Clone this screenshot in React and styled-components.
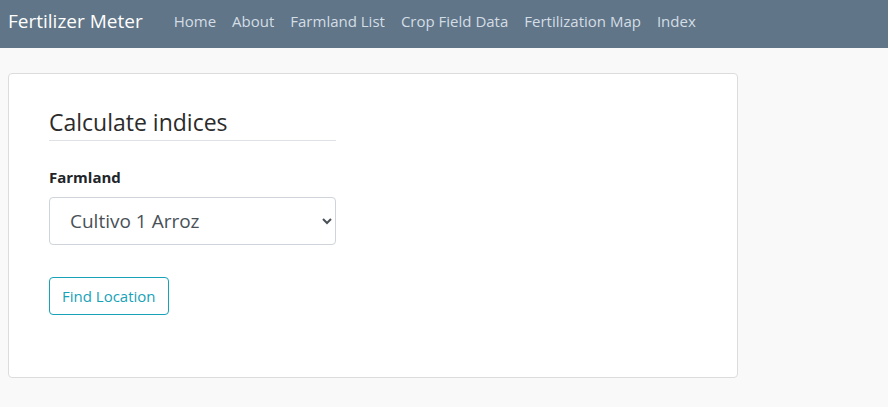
import React from 'react';
import styled, { createGlobalStyle } from 'styled-components';

const GlobalStyle = createGlobalStyle`
  html, body {
    margin: 0;
    padding: 0;
    background: #f9f9f9;
    font-family: 'Open Sans', 'Noto Sans', sans-serif;
    color: #212529;
  }
  * {
    box-sizing: border-box;
  }
`;

const NavBar = styled.nav`
  height: 48px;
  background-color: #607587;
  display: flex;
  align-items: center;
  padding: 0 8px 6px;
  .brand {
    color: #fff;
    font-size: 19px;
    margin-right: 31px;
    white-space: nowrap;
  }
`;

const NavLinks = styled.div`
  display: flex;
  gap: 16px;
`;

const NavLink = styled.a`
  color: #d3dde6;
  font-size: 15px;
  text-decoration: none;
  white-space: nowrap;
`;

const Main = styled.main`
  padding: 25px 8px;
`;

const Card = styled.section`
  width: 730px;
  height: 305px;
  background: #fff;
  border: 1px solid #dcdcdc;
  border-radius: 4px;
  padding: 34px 40px;
`;

const Form = styled.div`
  width: 287px;
  display: flex;
  flex-direction: column;
`;

const Heading = styled.h3`
  margin: 0 0 26px;
  font-size: 23px;
  font-weight: 400;
  line-height: 29px;
  padding-bottom: 3px;
  border-bottom: 1px solid #dee2e6;
  color: #2b2b2b;
`;

const Label = styled.label`
  font-size: 15px;
  font-weight: 700;
  line-height: 20px;
  margin-bottom: 10px;
  color: #212529;
`;

const Select = styled.select`
  height: 48px;
  width: 100%;
  font-family: inherit;
  font-size: 19px;
  color: #495057;
  padding: 0 12px 0 16px;
  border: 1px solid #ced4da;
  border-radius: 4px;
  background: #fff;
  margin-bottom: 32px;
`;

const OutlineButton = styled.button`
  align-self: flex-start;
  height: 38px;
  padding: 0 12px;
  font-family: inherit;
  font-size: 15px;
  color: #17a2b8;
  background: transparent;
  border: 1px solid #17a2b8;
  border-radius: 4px;
`;

const links = ['Home', 'About', 'Farmland List', 'Crop Field Data', 'Fertilization Map', 'Index'];

export default function App() {
  return (
    <>
      <GlobalStyle />
      <NavBar>
        <span className="brand">Fertilizer Meter</span>
        <NavLinks>
          {links.map((l) => (
            <NavLink key={l} href="#">
              {l}
            </NavLink>
          ))}
        </NavLinks>
      </NavBar>
      <Main>
        <Card>
          <Form>
            <Heading>Calculate indices</Heading>
            <Label htmlFor="farmland">Farmland</Label>
            <Select id="farmland" defaultValue="1">
              <option value="1">Cultivo 1 Arroz</option>
            </Select>
            <OutlineButton>Find Location</OutlineButton>
          </Form>
        </Card>
      </Main>
    </>
  );
}
